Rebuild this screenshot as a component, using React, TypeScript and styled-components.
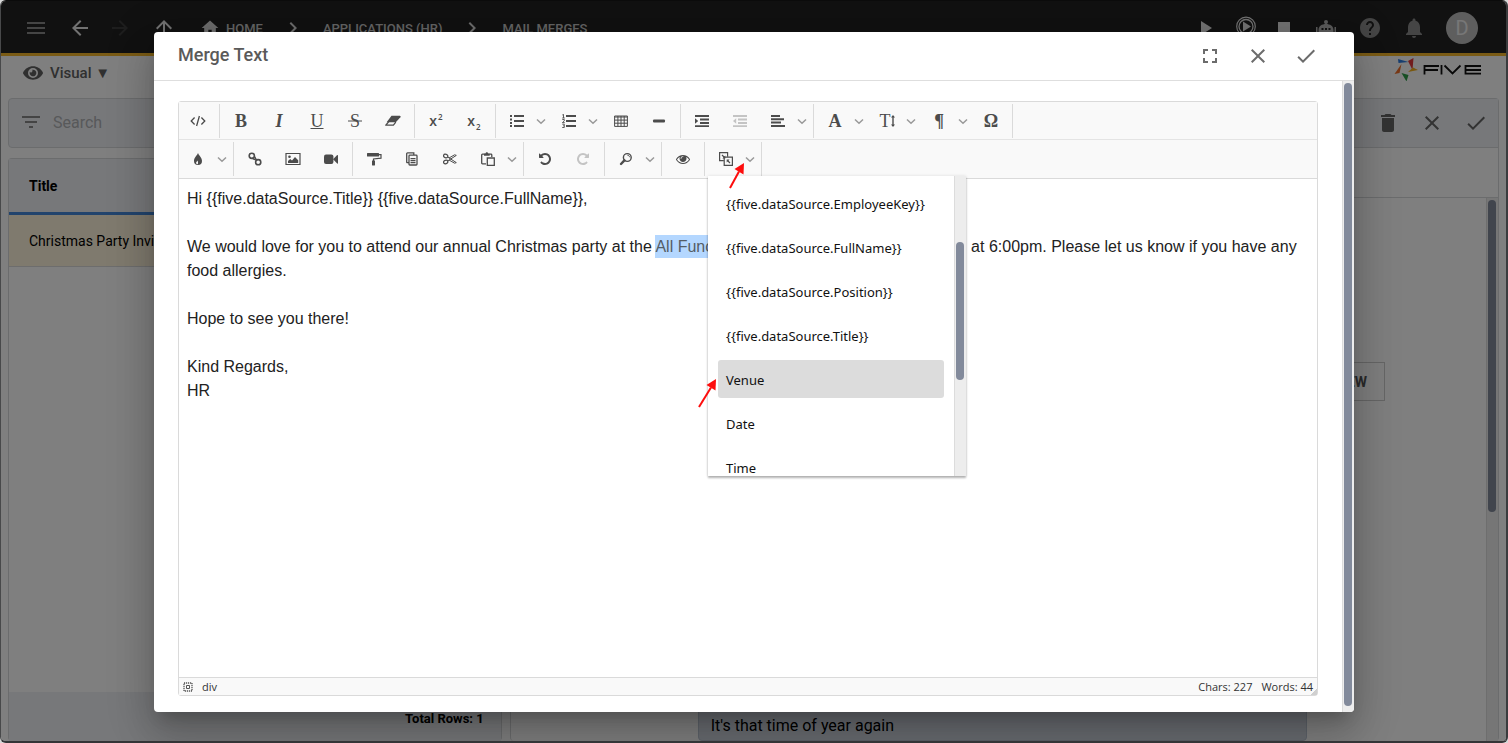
import React from "react";
import styled, { createGlobalStyle, css } from "styled-components";
import {
  MdMenu, MdArrowBack, MdArrowForward, MdArrowUpward, MdHome, MdChevronRight, MdPlayArrow,
  MdStop, MdHelp, MdNotifications, MdFilterList, MdDelete, MdClose, MdCheck, MdFullscreen,
} from "react-icons/md";
import { FaEye } from "react-icons/fa";

const GlobalStyle = createGlobalStyle`
  *, *::before, *::after { box-sizing: border-box; }
  body { margin: 0; background: #d8d8d8; font-family: Roboto, "Liberation Sans", sans-serif; }
  button { border: 0; padding: 0; background: none; font: inherit; color: inherit; cursor: pointer; }
`;

/* ---------- application behind the dialog ---------- */

const Frame = styled.div`
  position: relative;
  display: flex;
  flex-direction: column;
  height: 100vh;
  overflow: hidden;
  border: 1px solid #0b0b0b;
  border-color: #0b0b0b #3a3b3d #343537 #48494a;
  border-width: 1px 2px 2px 1px;
  border-radius: 6px;
  background: #fff;
`;

const AppBar = styled.header`
  display: flex;
  flex: none;
  align-items: center;
  height: 55px;
  padding: 2px 28px 0 23px;
  border-bottom: 3px solid #f5b62a;
  background: #222;
  color: #e4e4e4;
`;

const BarButton = styled.button<{ $tone?: string; $gap?: number }>`
  display: flex;
  align-items: center;
  justify-content: center;
  width: 24px;
  height: 24px;
  margin-right: ${(p) => p.$gap ?? 20}px;
  color: ${(p) => p.$tone ?? "#e4e4e4"};
  font-size: 24px;
`;

const Crumbs = styled.nav`
  display: flex;
  align-items: center;
  gap: 18px;
  font-size: 13px;
  font-weight: 500;
  a { display: flex; align-items: center; gap: 6px; color: #c8c8c8; text-decoration: none; }
  svg { flex: none; color: #d8d8d8; }
`;

const Spacer = styled.div`
  flex: 1;
`;

const Avatar = styled.div`
  display: flex;
  align-items: center;
  justify-content: center;
  width: 32px;
  height: 32px;
  border-radius: 50%;
  background: #bdbdbd;
  color: #efefef;
  font-size: 20px;
`;

const SubBar = styled.div`
  display: flex;
  flex: none;
  align-items: flex-start;
  justify-content: space-between;
  height: 42px;
  padding: 1px 24px 0 22px;
`;

const ViewButton = styled.button`
  display: flex;
  align-items: center;
  gap: 7px;
  height: 32px;
  color: #606060;
  font-size: 15px;
  font-weight: 500;
`;

const Columns = styled.main`
  display: flex;
  flex: 1;
  gap: 8px;
  min-height: 0;
  padding: 0 7px;
`;

const Side = styled.section`
  display: flex;
  flex: 1;
  flex-direction: column;
  gap: 10px;
  min-width: 0;
`;

const panel = css`
  border: 1px solid #d6d8da;
  border-radius: 4px;
`;

const SearchBox = styled.label`
  ${panel}
  display: flex;
  flex: none;
  align-items: center;
  gap: 8px;
  height: 50px;
  padding: 0 10px 2px;
  background: #eef1f5;
  color: #888;
  input {
    flex: 1;
    border: 0;
    background: none;
    font: 16px Roboto, sans-serif;
    outline: 0;
  }
  input::placeholder { color: #b0b2b4; opacity: 1; }
`;

const ListPanel = styled.div`
  ${panel}
  display: flex;
  flex: 1;
  flex-direction: column;
  justify-content: space-between;
  border-bottom: 0;
`;

const Table = styled.table`
  width: 100%;
  border-collapse: separate;
  border-spacing: 0;
  font-size: 14px;
  text-align: left;
  th {
    height: 56px;
    padding: 0 20px;
    border-bottom: 3px solid #4488da;
    background: #eef1f5;
    font-weight: 700;
  }
  td {
    height: 52px;
    padding: 0 20px;
    border-bottom: 1px solid #dadada;
    background: #fff5dc;
  }
`;

const ListFooter = styled.footer`
  height: 49px;
  padding: 19px 17px 0;
  background: #eef1f5;
  font-size: 13px;
  font-weight: 700;
  line-height: 16px;
  text-align: right;
`;

const Detail = styled.section`
  ${panel}
  display: flex;
  flex: 2;
  flex-direction: column;
  border-bottom: 0;
`;

const DetailBar = styled.div`
  display: flex;
  flex: none;
  align-items: center;
  justify-content: flex-end;
  gap: 20px;
  height: 49px;
  padding-right: 10px;
  border-bottom: 1px solid #d6d8da;
  background: #eef1f5;
  button { display: flex; color: #666; font-size: 24px; }
`;

const DetailTabs = styled.div`
  flex: none;
  height: 50px;
  border-bottom: 1px solid #d6d8da;
`;

const DetailBody = styled.div`
  display: flex;
  flex: 1;
  min-height: 0;
`;

const DetailForm = styled.div`
  display: flex;
  flex: 1;
  flex-direction: column;
  justify-content: space-between;
  padding: 164px 101px 0 187px;
`;

const PreviewButton = styled.button`
  align-self: flex-end;
  height: 39px;
  padding: 0 17px;
  border: 1px solid #ccc;
  color: #555;
  font-size: 14px;
  font-weight: 700;
`;

const Message = styled.p`
  height: 56px;
  margin: 0 78px 0 0;
  padding: 28px 12px 0;
  border: 1px solid #bcc6d4;
  border-radius: 4px;
  background: #d2d9e3;
  font-size: 16px;
  line-height: 24px;
`;

/* ---------- scroll bar shared by the panes ---------- */

const Track = styled.div<{ $start: number; $end?: number; $thumb?: number }>`
  flex: none;
  width: 12px;
  padding: ${(p) => p.$start}px 2px ${(p) => p.$end ?? 0}px 1px;
  border-left: 1px solid #dcdcdc;
  background: #ededed;
  &::before {
    content: "";
    display: block;
    height: ${(p) => (p.$thumb ? `${p.$thumb}px` : "100%")};
    border-radius: 4px;
    background: #828a9b;
  }
`;

/* ---------- dialog ---------- */

const Backdrop = styled.div`
  position: absolute;
  inset: 0;
  display: flex;
  justify-content: center;
  padding: 31px 32px 29px 33px;
  background: rgba(0, 0, 0, 0.5);
`;

const Dialog = styled.section`
  display: flex;
  flex-direction: column;
  width: 100%;
  max-width: 1200px;
  overflow: hidden;
  border-radius: 4px;
  background: #fff;
  box-shadow: 0 11px 15px -7px rgba(0, 0, 0, 0.2), 0 24px 38px 3px rgba(0, 0, 0, 0.14),
    0 9px 46px 8px rgba(0, 0, 0, 0.12);
`;

const DialogHead = styled.header`
  display: flex;
  flex: none;
  align-items: center;
  gap: 24px;
  height: 49px;
  padding: 0 36px 0 24px;
  border-bottom: 1px solid #dedede;
  color: #5a5a5a;
  h2 { flex: 1; margin: 0; font-size: 18px; font-weight: 500; line-height: 22px; padding-bottom: 2px; }
  button { display: flex; color: #6c6c6c; font-size: 24px; }
`;

const DialogBody = styled.div`
  display: flex;
  flex: 1;
  min-height: 0;
`;

const EditorArea = styled.div`
  display: flex;
  flex: 1;
  min-width: 0;
  padding: 20px 24px 16px;
`;

const Editor = styled.div`
  display: flex;
  flex: 1;
  flex-direction: column;
  min-width: 0;
  border: 1px solid #dadada;
  border-radius: 3px;
`;

const ToolRow = styled.div`
  display: flex;
  flex: none;
  height: 38px;
  padding-top: 2px;
  border-bottom: 1px solid #e4e4e4;
  background: #f9f9f9;
  & + & { border: 0; }
`;

const ToolGroup = styled.div`
  position: relative;
  display: flex;
  height: 34px;
  padding: 0 2px;
  border-right: 1px solid #dadada;
  &:first-child { padding-left: 0; }
`;

const Tool = styled.button`
  display: flex;
  align-items: center;
  justify-content: center;
  width: 38px;
  height: 34px;
  color: #4c4c4c;
  &:disabled { color: #c4c4c4; }
`;

const DropArrow = styled.button`
  display: flex;
  align-items: center;
  width: 14px;
  height: 34px;
  color: #999;
`;

const Letter = styled.span<{ $italic?: boolean; $line?: string; $plain?: boolean }>`
  display: flex;
  align-items: center;
  font-family: "Liberation Serif", serif;
  font-size: 18px;
  font-weight: ${(p) => (p.$plain ? 400 : 700)};
  font-style: ${(p) => (p.$italic ? "italic" : "normal")};
  text-decoration: ${(p) => p.$line ?? "none"};
  line-height: 20px;
`;

const Script = styled.span`
  font-family: "Open Sans", sans-serif;
  font-size: 14px;
  font-weight: 600;
  line-height: 16px;
  sup, sub { margin-left: 1px; font-size: 8px; line-height: 0; }
`;

const Content = styled.div`
  flex: 1;
  padding: 8px;
  border-top: 1px solid #dadada;
  background: #fff;
  color: #222;
  font: 16px/24px "Liberation Sans", Arial, sans-serif;
  outline: 0;
  p { margin: 0 0 24px; }
  mark { padding: 3px 0; background: #b4d7ff; color: #555d66; }
`;

const StatusBar = styled.footer`
  display: flex;
  flex: none;
  align-items: center;
  gap: 9px;
  height: 18px;
  padding: 0 4px;
  border-top: 1px solid #dadada;
  background: linear-gradient(135deg, transparent 50%, #d0d0d0 50%) right bottom / 7px 7px no-repeat #f9f9f9;
  color: #333;
  font: 11px "Open Sans", "Noto Sans", sans-serif;
  svg { color: #555; }
`;

const Popup = styled.div`
  position: absolute;
  z-index: 2;
  top: 34px;
  left: 3px;
  width: 258px;
`;

const PopupBox = styled.div`
  display: flex;
  height: 300px;
  overflow: hidden;
  background: #fff;
  box-shadow: 0 2px 2px rgba(0, 0, 0, 0.28), 0 0 3px rgba(0, 0, 0, 0.12);
`;

const Options = styled.div`
  display: flex;
  flex: 1;
  flex-direction: column;
  gap: 6px;
  min-width: 0;
  padding: 8px 10px;
`;

const Option = styled.button<{ $active?: boolean }>`
  flex: none;
  height: 38px;
  padding: 1px 8px 0;
  border-radius: 3px;
  background: ${(p) => (p.$active ? "#dcdcdc" : "none")};
  color: #111;
  font: 13px "Noto Sans", "Open Sans", sans-serif;
  text-align: left;
  white-space: nowrap;
`;

const Pointer = styled.svg<{ $x: number; $y: number }>`
  position: absolute;
  left: ${(p) => p.$x}px;
  top: ${(p) => p.$y}px;
  pointer-events: none;
`;

/* ---------- drawings ---------- */

const Icon = ({ children, size = 14, box = "0 0 14 14" }: { children: React.ReactNode; size?: number; box?: string }) => (
  <svg width={size} height={size} viewBox={box} fill="currentColor" aria-hidden="true">{children}</svg>
);

const Chevron = () => (
  <svg width="10" height="10" viewBox="0 0 10 10" fill="none" stroke="currentColor" strokeWidth="1.5" aria-hidden="true">
    <path d="M1 3.5 5 7.3 9 3.5" />
  </svg>
);

const Arrow = ({ x, y, tail }: { x: number; y: number; tail: string }) => (
  <Pointer $x={x} $y={y} width="20" height="30" viewBox="0 0 20 30" aria-hidden="true">
    <path d={`M${tail} 13 9.5`} stroke="#fd0d0d" strokeWidth="2" />
    <path d="M18 1 17.500 12.500 8.500 7Z" fill="#fd0d0d" />
  </Pointer>
);

const undoPath =
  "M1664 896q0 156-61 298t-164 245-245 164-298 61q-172 0-327-72.5t-264-204.5q-7-10-6.5-22.5t8.5-20.5l137-138q10-9 25-9 16 2 23 12 73 95 179 147t225 52q104 0 198.5-40.5t163.5-109.5 109.5-163.5 40.5-198.5-40.5-198.5-109.5-163.5-163.5-109.5-198.5-40.5q-98 0-188 35.5t-160 101.5l137 138q31 30 14 69-17 40-59 40h-448q-26 0-45-19t-19-45v-448q0-42 40-59 39-17 69 14l130 129q107-101 244.5-156.5t284.5-55.5q156 0 298 61t245 164 164 245 61 298z";
const eyePath =
  "M1664 960q-152-236-381-353 61 104 61 225 0 185-131.5 316.5t-316.5 131.5-316.5-131.5-131.5-316.5q0-121 61-225-229 117-381 353 133 205 333.5 326.5t434.5 121.5 434.5-121.5 333.5-326.5zm-720-384q0-20-14-34t-34-14q-125 0-214.5 89.5t-89.5 214.5q0 20 14 34t34 14 34-14 14-34q0-86 61-147t147-61q20 0 34-14t14-34zm848 384q0 34-20 69-140 230-376.5 368.5t-499.5 138.5-499.5-139-376.5-368q-20-35-20-69t20-69q140-229 376.5-368t499.5-139 499.5 139 376.5 368q20 35 20 69z";

const icons: Record<string, React.ReactNode> = {
  source: (
    <Icon size={16} box="0 0 16 16">
      <path d="M4.6 4.5 1.2 8l3.4 3.5M11.4 4.5 14.8 8l-3.4 3.5M9.4 3 6.6 13" fill="none" stroke="currentColor" strokeWidth="1.3" />
    </Icon>
  ),
  eraser: (
    <Icon size={16} box="0 0 16 16">
      <path d="M6.5 2.8h8.3c.8 0 1.1.8.6 1.4L10.8 9.2H1.6z" />
      <path d="M3.8 8.6.8 12.200h7.600l2.400-3" fill="none" stroke="currentColor" strokeWidth="1.3" strokeLinejoin="round" />
    </Icon>
  ),
  ul: <Icon><path d="M0 1h2v2H0zM0 4.400h2v2H0zM0 8h2v2H0zM0 11h2v2H0zM4 1h10v2H4zM4 6h10v2H4zM4 11h10v2H4z" /></Icon>,
  ol: (
    <Icon>
      <path d="M4 1h10v2H4zM4 6h10v2H4zM4 11h10v2H4z" />
      <path d="M.3 1 1.500.3V4M.2 4h2.600M.3 5.500h2v1.400L.4 8.600h2.300M.3 10.200h2v1.600H1.200M2.300 11.800v1.700H.2" fill="none" stroke="currentColor" strokeWidth=".9" />
    </Icon>
  ),
  table: (
    <Icon>
      <path d="M.6 2h12.800v10.400H.6zM.6 3H13.400M.6 6.100h12.800M.6 9.200h12.800M3.900 2v10.400M7 2v10.400M10.200 2v10.400" fill="none" stroke="currentColor" />
    </Icon>
  ),
  hr: <Icon><rect x="1" y="5.500" width="12" height="3" rx="1" /></Icon>,
  indent: <Icon><path d="M0 1h14v2H0zM5 4.500h9v2H5zM5 8h9v2H5zM0 11.200h14v1.800H0zM0 4.200 3.200 7 0 9.800z" /></Icon>,
  outdent: <Icon><path d="M0 1h14v2H0zM5 4.500h9v2H5zM5 8h9v2H5zM0 11.200h14v1.800H0zM3.200 4.200 0 7l3.200 2.800z" /></Icon>,
  align: <Icon><path d="M0 1h9v2H0zM0 4.300h13v2H0zM0 7.600h10v2H0zM0 11h14v2H0z" /></Icon>,
  height: (
    <svg width="4" height="14" viewBox="0 0 4 14" fill="currentColor" aria-hidden="true">
      <path d="M2 1 4 3.500H2.700v7H4L2 13 0 10.500h1.300v-7H0z" />
    </svg>
  ),
  strike: (
    <svg width="14" height="2" viewBox="0 0 14 2" aria-hidden="true"><path d="M0 1h14" stroke="currentColor" /></svg>
  ),
  drop: (
    <Icon>
      <path fillRule="evenodd" d="M7 1c.6 2.200 4 4.600 4 8a4 4 0 0 1-8 0c0-3.400 3.400-5.800 4-8zM6.400 8.500c-.3 1-1.300 1.400-1.300 2.300a1.300 1.300 0 0 0 1.700 1.200c.6-1 .2-2.500-.4-3.500z" />
    </Icon>
  ),
  link: (
    <Icon>
      <g fill="none" stroke="currentColor" strokeWidth="1.600">
        <circle cx="3.800" cy="3.800" r="2.600" />
        <circle cx="10.200" cy="10.200" r="2.600" />
        <path d="m4.400 6.400 2 1 1.200-.6M6.600 4.600l1 1.800L7 8M7.500 7l1.800.7" strokeWidth="1.300" />
      </g>
    </Icon>
  ),
  image: (
    <Icon size={16} box="0 0 16 16">
      <path d="M1 2.500h14v11H1z" fill="none" stroke="currentColor" strokeWidth="1.200" />
      <circle cx="4.500" cy="5.700" r="1.300" />
      <path d="M3 12v-2l2.200-2L7 9.500 10 6l3.200 3.200V12z" />
    </Icon>
  ),
  video: <Icon><rect x="0" y="2.500" width="9.400" height="9.400" rx="2" /><path d="m9 7.200 4.200-4.200c.5-.3.800 0 .8.400v7.800c0 .5-.4.600-.8.300z" /></Icon>,
  paint: (
    <Icon size={16} box="0 0 16 16">
      <rect x="1" y="2" width="12" height="3.600" rx=".6" />
      <path d="M13 3.700h2v3.500L7.500 8v2" fill="none" stroke="currentColor" strokeWidth="1.200" />
      <rect x="6" y="9.400" width="3" height="5" rx=".4" />
    </Icon>
  ),
  copy: (
    <Icon>
      <path d="M1.700 10.700V1.700c0-.5.300-.8.800-.8h6.300V3" fill="none" stroke="currentColor" strokeWidth="1.300" />
      <path d="M1.600 10.600H4" stroke="currentColor" strokeWidth="1.300" />
      <rect x="4" y="3.200" width="8" height="9.800" rx=".8" fill="none" stroke="currentColor" strokeWidth="1.300" />
      <path d="M5.500 6h5v1.300h-5zM5.500 8h5v1.200h-5zM5.500 10h5v1.200h-5z" />
    </Icon>
  ),
  cut: (
    <Icon>
      <g fill="none" stroke="currentColor" strokeWidth="1.200">
        <ellipse cx="2.700" cy="4" rx="2.200" ry="1.700" transform="rotate(20 2.700 4)" />
        <ellipse cx="2.700" cy="10" rx="2.200" ry="1.700" transform="rotate(-20 2.700 10)" />
        <path d="M4.600 5 13.300 10.600l-1.700.6L6 8M4.600 9l8.700-5.600-1.700-.6L6 6" strokeWidth="1" />
      </g>
    </Icon>
  ),
  paste: (
    <Icon>
      <path d="M5 11.800H1.500c-.5 0-.8-.3-.8-.8V3c0-.5.300-.8.800-.8H10c.5 0 .8.300.8.800v2" fill="none" stroke="currentColor" strokeWidth="1.300" />
      <path d="M3 3.800V1.800h1.500C4.700.7 5.200.3 5.800.3S7 .7 7.200 1.800h1.500v2z" />
      <path d="M6.300 6h7v7.400h-7z" fill="none" stroke="currentColor" strokeWidth="1.300" />
    </Icon>
  ),
  undo: <Icon box="0 0 1792 1792"><path d={undoPath} /></Icon>,
  redo: <Icon box="0 0 1792 1792"><path d={undoPath} transform="matrix(-1 0 0 1 1792 0)" /></Icon>,
  find: (
    <Icon>
      <circle cx="8.300" cy="5.500" r="3.900" fill="none" stroke="currentColor" strokeWidth="1.400" />
      <path d="M5.400 8.400 2 12" stroke="currentColor" strokeWidth="2.400" strokeLinecap="round" />
      <path d="M8.400 3.200c1.200 0 2 .8 2.200 2" fill="none" stroke="currentColor" />
    </Icon>
  ),
  eye: <Icon box="0 0 1792 1792"><path d={eyePath} /></Icon>,
  merge: (
    <Icon size={16} box="0 0 16 16">
      <g fill="none" stroke="currentColor" strokeWidth="1.200">
        <path d="M5.800 9.600H1.600V1.600h8v4.200" />
        <path d="M6.200 6.200h8.200v8.200H6.200z" />
        <path d="m4 4 2.500 2.500M12 12 9.500 9.500" />
      </g>
      <path d="M7.300 4.500v2.900H4.400zM8.700 11.500V8.600h2.900z" />
    </Icon>
  ),
};

const Robot = () => (
  <svg width="24" height="24" viewBox="0 0 24 24" fill="currentColor" aria-hidden="true">
    <circle cx="12" cy="6" r="2" />
    <path d="M11.300 6h1.400v3h-1.400zM2 11h1.500v6H2zM20.500 11H22v6h-1.500z" />
    <path fillRule="evenodd" d="M4.500 14C4.500 10 8 8 12 8s7.500 2 7.500 6v3h-15zM7.500 12v2h2v-2zM11 12v2h2v-2zM14.500 12v2h2v-2z" />
  </svg>
);

const PlayRing = () => (
  <svg width="22" height="24" viewBox="0 0 22 24" fill="none" stroke="currentColor" aria-hidden="true">
    <circle cx="11" cy="10.500" r="9.300" strokeWidth="1.200" />
    <circle cx="11" cy="10.500" r="7" strokeWidth="1.300" />
    <path d="m8 5.500 8 5-8 5z" fill="currentColor" stroke="none" />
  </svg>
);

const Logo = () => (
  <svg width="88" height="24" viewBox="0 0 88 24" role="img" aria-label="Five">
    <path d="M4 2 14.500 5 4.500 6z" fill="#2f7de0" />
    <path d="m19.500 1-1 12-4.500-9z" fill="#e33b3b" />
    <path d="m14 15 10-2-5-2.500z" fill="#f2b01e" />
    <path d="m7.500 16 7 2-2 6.500z" fill="#2f9e4b" />
    <path d="M7.500 7 5.500 16 .5 17z" fill="#f0702a" />
    <g fill="none" stroke="#111" strokeWidth="1.800">
      <path d="M45 9H30.500v8.500M30.500 13H44M47.500 8v9.500M50.500 8.500l8 8 8-8M87 9H71.500v7.600H87M71.500 13H87" />
    </g>
  </svg>
);

const StrikeBox = styled.span`
  display: grid;
  place-items: center;
  > * { grid-area: 1 / 1; }
`;

/* ---------- toolbar data ---------- */

type Item = { label: string; face: React.ReactNode; menu?: boolean; off?: boolean };

const rowOne: Item[][] = [
  [{ label: "Source", face: icons.source }],
  [
    { label: "Bold", face: <Letter>B</Letter> },
    { label: "Italic", face: <Letter $italic>I</Letter> },
    { label: "Underline", face: <Letter $plain $line="underline">U</Letter> },
    { label: "Strike through", face: <StrikeBox><Letter $plain>S</Letter>{icons.strike}</StrikeBox> },
    { label: "Clear formatting", face: icons.eraser },
  ],
  [
    { label: "Superscript", face: <Script>x<sup>2</sup></Script> },
    { label: "Subscript", face: <Script>x<sub>2</sub></Script> },
  ],
  [
    { label: "Bullet list", face: icons.ul, menu: true },
    { label: "Numbered list", face: icons.ol, menu: true },
    { label: "Table", face: icons.table },
    { label: "Horizontal line", face: icons.hr },
  ],
  [
    { label: "Indent", face: icons.indent },
    { label: "Outdent", face: icons.outdent, off: true },
    { label: "Align", face: icons.align, menu: true },
  ],
  [
    { label: "Font", face: <Letter>A</Letter>, menu: true },
    { label: "Font size", face: <Letter $plain>T{icons.height}</Letter>, menu: true },
    { label: "Paragraph", face: <Letter>¶</Letter>, menu: true },
    { label: "Symbol", face: <Letter>Ω</Letter> },
  ],
];

const rowTwo: Item[][] = [
  [{ label: "Colour", face: icons.drop, menu: true }],
  [
    { label: "Link", face: icons.link },
    { label: "Image", face: icons.image },
    { label: "Video", face: icons.video },
  ],
  [
    { label: "Copy format", face: icons.paint },
    { label: "Copy", face: icons.copy },
    { label: "Cut", face: icons.cut },
    { label: "Paste", face: icons.paste, menu: true },
  ],
  [
    { label: "Undo", face: icons.undo },
    { label: "Redo", face: icons.redo, off: true },
  ],
  [{ label: "Find", face: icons.find, menu: true }],
  [{ label: "Preview", face: icons.eye }],
];

const Tools = ({ items }: { items: Item[] }) => (
  <>
    {items.map((item) => (
      <React.Fragment key={item.label}>
        <Tool type="button" aria-label={item.label} disabled={item.off}>{item.face}</Tool>
        {item.menu && <DropArrow type="button" aria-label={`${item.label} options`}><Chevron /></DropArrow>}
      </React.Fragment>
    ))}
  </>
);

const fields = [
  "{{five.dataSource.EmployeeKey}}",
  "{{five.dataSource.FullName}}",
  "{{five.dataSource.Position}}",
  "{{five.dataSource.Title}}",
  "Venue",
  "Date",
  "Time",
];

export default function App() {
  return (
    <>
      <GlobalStyle />
      <Frame>
        <AppBar>
          <BarButton aria-label="Menu" $tone="#8a8a8a"><MdMenu /></BarButton>
          <BarButton aria-label="Back" $gap={16}><MdArrowBack /></BarButton>
          <BarButton aria-label="Forward" $tone="#3c3c3c"><MdArrowForward /></BarButton>
          <BarButton aria-label="Up" $gap={24}><MdArrowUpward /></BarButton>
          <Crumbs aria-label="Breadcrumb">
            <a href="#home"><MdHome size={20} />HOME</a>
            <MdChevronRight size={24} />
            <a href="#applications">APPLICATIONS (HR)</a>
            <MdChevronRight size={24} />
            <a href="#merges">MAIL MERGES</a>
          </Crumbs>
          <Spacer />
          <BarButton aria-label="Run" $gap={17}><MdPlayArrow /></BarButton>
          <BarButton aria-label="Debug" $gap={14}><PlayRing /></BarButton>
          <BarButton aria-label="Stop" $gap={18}><MdStop /></BarButton>
          <BarButton aria-label="Assistant" $tone="#b4b4b4"><Robot /></BarButton>
          <BarButton aria-label="Help" $tone="#8a8a8a"><MdHelp /></BarButton>
          <BarButton aria-label="Notifications" $tone="#8a8a8a"><MdNotifications /></BarButton>
          <Avatar>D</Avatar>
        </AppBar>
        <SubBar>
          <ViewButton type="button"><FaEye size={20} />Visual ▼</ViewButton>
          <Logo />
        </SubBar>
        <Columns>
          <Side>
            <SearchBox>
              <MdFilterList size={24} />
              <input type="text" placeholder="Search" aria-label="Search" />
            </SearchBox>
            <ListPanel>
              <Table>
                <thead><tr><th>Title</th></tr></thead>
                <tbody><tr><td>Christmas Party Invitation</td></tr></tbody>
              </Table>
              <ListFooter>Total Rows: 1</ListFooter>
            </ListPanel>
          </Side>
          <Detail>
            <DetailBar>
              <button type="button" aria-label="Delete"><MdDelete /></button>
              <button type="button" aria-label="Cancel"><MdClose /></button>
              <button type="button" aria-label="Save"><MdCheck /></button>
            </DetailBar>
            <DetailTabs />
            <DetailBody>
              <DetailForm>
                <PreviewButton type="button">VIEW</PreviewButton>
                <Message>It's that time of year again</Message>
              </DetailForm>
              <Track $start={2} $thumb={312} />
            </DetailBody>
          </Detail>
        </Columns>

        <Backdrop>
          <Dialog role="dialog" aria-labelledby="merge-title">
            <DialogHead>
              <h2 id="merge-title">Merge Text</h2>
              <button type="button" aria-label="Full screen"><MdFullscreen /></button>
              <button type="button" aria-label="Close"><MdClose /></button>
              <button type="button" aria-label="Accept"><MdCheck /></button>
            </DialogHead>
            <DialogBody>
              <EditorArea>
                <Editor>
                  <ToolRow>
                    {rowOne.map((group) => (
                      <ToolGroup key={group[0].label}><Tools items={group} /></ToolGroup>
                    ))}
                  </ToolRow>
                  <ToolRow>
                    {rowTwo.map((group) => (
                      <ToolGroup key={group[0].label}><Tools items={group} /></ToolGroup>
                    ))}
                    <ToolGroup>
                      <Tools items={[{ label: "Merge fields", face: icons.merge, menu: true }]} />
                      <Popup>
                        <PopupBox>
                          <Options>
                            {fields.map((field) => (
                              <Option key={field} type="button" $active={field === "Venue"}>{field}</Option>
                            ))}
                          </Options>
                          <Track $start={66} $thumb={138} />
                        </PopupBox>
                        <Arrow x={18} y={-14} tail="4 26" />
                        <Arrow x={-10} y={202} tail="1 29" />
                      </Popup>
                    </ToolGroup>
                  </ToolRow>
                  <Content contentEditable suppressContentEditableWarning role="textbox" aria-label="Merge text" spellCheck={false}>
                    <p>Hi {"{{five.dataSource.Title}} {{five.dataSource.FullName}}"},</p>
                    <p>
                      We would love for you to attend our annual Christmas party at the{" "}
                      <mark>All Function Centre</mark> on Friday 18 December, at 6:00pm. Please let us know if you have any
                      food allergies.
                    </p>
                    <p>Hope to see you there!</p>
                    <p>Kind Regards,<br />HR</p>
                  </Content>
                  <StatusBar>
                    <Icon size={10} box="0 0 10 10">
                      <path d="M1 1h8v8H1z" fill="none" stroke="currentColor" strokeWidth="1.300" strokeDasharray="1.200 .8" />
                      <path d="M3.500 3.500h3v3h-3z" fill="none" stroke="currentColor" />
                    </Icon>
                    <span>div</span>
                    <Spacer />
                    <span>Chars: 227</span>
                    <span>Words: 44</span>
                  </StatusBar>
                </Editor>
              </EditorArea>
              <Track $start={2} $end={6} />
            </DialogBody>
          </Dialog>
        </Backdrop>
      </Frame>
    </>
  );
}
